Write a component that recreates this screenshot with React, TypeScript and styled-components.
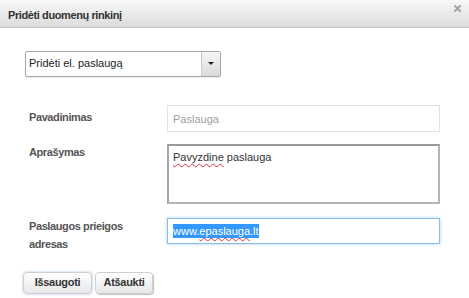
import React from "react";
import styled, { createGlobalStyle, css } from "styled-components";

const GlobalStyle = createGlobalStyle`
  html, body { margin: 0; padding: 0; background: #fff; }
  body { font-family: "Liberation Sans", Arial, sans-serif; }
  * { box-sizing: border-box; }
`;

const Dialog = styled.div`
  width: 469px;
  height: 298px;
  overflow: hidden;
  background: #fff;
`;

const Header = styled.div`
  height: 28px;
  display: flex;
  justify-content: space-between;
  align-items: flex-start;
  padding: 0 7px 0 8px;
  background: linear-gradient(#f8f8f8, #dcdcdc);
  border-bottom: 1px solid #c4c4c4;
`;

const Title = styled.div`
  font-size: 11px;
  font-weight: bold;
  letter-spacing: -0.4px;
  color: #333;
  line-height: 26px;
  padding-top: 2px;
`;

const Close = styled.button`
  margin-top: 4px;
  width: 9px;
  height: 9px;
  padding: 0;
  border: 0;
  background: none;
  display: flex;
`;

const Body = styled.div`
  padding: 23px 0 0 23px;
`;

const Select = styled.div`
  margin-left: 2px;
  width: 196px;
  height: 26px;
  display: flex;
  border: 1px solid #a8a8a8;
  border-radius: 2px;
  background: #fff;
  box-shadow: 0 1px 1px rgba(0, 0, 0, 0.08);
`;

const SelectText = styled.div`
  flex: 1;
  padding-left: 3px;
  font-size: 11px;
  line-height: 22px;
  color: #222;
`;

const SelectArrow = styled.div`
  width: 19px;
  display: flex;
  align-items: center;
  justify-content: center;
  border-left: 1px solid #c8c8c8;
  background: linear-gradient(#f6f6f6, #dadada);
  &::after {
    content: "";
    border-left: 3px solid transparent;
    border-right: 3px solid transparent;
    border-top: 3px solid #222;
    margin-top: -2px;
  }
`;

const Form = styled.div`
  margin-top: 28px;
  padding-left: 6px;
  display: flex;
  flex-direction: column;
`;

const Row = styled.div<{ $gap: number }>`
  display: grid;
  grid-template-columns: 138px 273px;
  margin-top: ${(p) => p.$gap}px;
`;

const Label = styled.div<{ $center?: boolean }>`
  font-size: 11px;
  font-weight: bold;
  letter-spacing: -0.4px;
  color: #555;
  line-height: 18px;
  align-self: ${(p) => (p.$center ? "center" : "start")};
  margin-top: ${(p) => (p.$center ? "-3px" : "-1px")};
`;

type Variant = "muted" | "area" | "focus";

const Field = styled.div<{ $variant: Variant; $h: number }>`
  height: ${(p) => p.$h}px;
  font-size: 11px;
  color: #333;
  background: #fff;
  padding: 0 5px;
  ${(p) =>
    p.$variant === "muted" &&
    css`
      border: 1px solid #e3e3e3;
      color: #a0a0a0;
      display: flex;
      align-items: center;
    `}
  ${(p) =>
    p.$variant === "area" &&
    css`
      border: 2px solid #b4b4b4;
      border-top-color: #999;
      border-left-color: #a6a6a6;
      padding: 4px 4px;
      line-height: 14px;
    `}
  ${(p) =>
    p.$variant === "focus" &&
    css`
      border: 1px solid #86bfe9;
      box-shadow: 0 0 3px rgba(100, 170, 230, 0.55);
      display: flex;
      align-items: center;
    `}
`;

const Misspelled = styled.span`
  text-decoration: underline wavy #e0303c;
  text-decoration-thickness: 1px;
  text-underline-offset: 2px;
`;

const Selection = styled.span`
  background: #3399ff;
  color: #fff;
  line-height: 12px;
  padding: 1px 0;
`;

const Buttons = styled.div`
  margin-top: 19px;
  display: flex;
  gap: 3px;
`;

const Button = styled.button<{ $w: number; $focus?: boolean }>`
  width: ${(p) => p.$w}px;
  height: 22px;
  padding: 0 0 3px;
  font-family: inherit;
  font-size: 11px;
  font-weight: bold;
  letter-spacing: -0.3px;
  line-height: 16px;
  color: #333;
  border: 1px solid #cfcfcf;
  border-radius: 4px;
  background: linear-gradient(#ffffff, #e8e8e8);
  box-shadow: ${(p) =>
    p.$focus
      ? "0 0 3px rgba(120, 160, 210, 0.6)"
      : "1px 1px 1px rgba(0, 0, 0, 0.25)"};
`;

export default function App() {
  return (
    <>
      <GlobalStyle />
      <Dialog>
        <Header>
          <Title>Pridėti duomenų rinkinį</Title>
          <Close aria-label="Uždaryti">
            <svg width="9" height="9" viewBox="0 0 9 9">
              <path d="M2 2 L7 7 M7 2 L2 7" stroke="#a0a0a0" strokeWidth="1.8" strokeLinecap="square" />
            </svg>
          </Close>
        </Header>
        <Body>
          <Select>
            <SelectText>Pridėti el. paslaugą</SelectText>
            <SelectArrow />
          </Select>
          <Form>
            <Row $gap={0}>
              <Label $center>Pavadinimas</Label>
              <Field $variant="muted" $h={27}>Paslauga</Field>
            </Row>
            <Row $gap={12}>
              <Label>Aprašymas</Label>
              <Field $variant="area" $h={60}>
                <Misspelled>Pavyzdine</Misspelled> paslauga
              </Field>
            </Row>
            <Row $gap={14}>
              <Label>
                Paslaugos prieigos
                <br />
                adresas
              </Label>
              <Field $variant="focus" $h={26}>
                <Selection>
                  www.<Misspelled>epaslauga</Misspelled>.lt
                </Selection>
              </Field>
            </Row>
          </Form>
          <Buttons>
            <Button $w={69} $focus>Išsaugoti</Button>
            <Button $w={58}>Atšaukti</Button>
          </Buttons>
        </Body>
      </Dialog>
    </>
  );
}
